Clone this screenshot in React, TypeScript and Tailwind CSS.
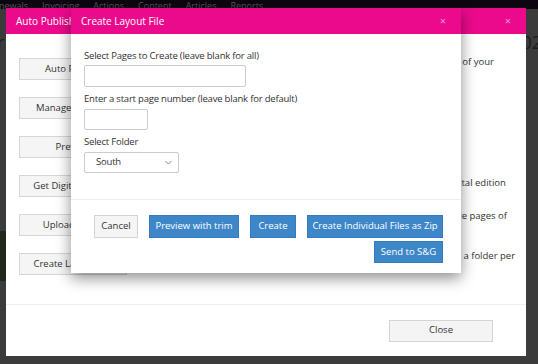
import React from "react";

const font = { fontFamily: '"Open Sans", "Liberation Sans", sans-serif' };

const navItems = ["newals", "Invoicing", "Actions", "Content", "Articles", "Reports"];

const rows = [
  { label: "Auto Publish", text: "Automatically publishes the current edition to all the configured outputs of your", shift: "-mt-[3px]" },
  { label: "Manage Outputs", text: "Manage outputs", shift: "-mt-[3px]" },
  { label: "Preview", text: "Preview", shift: "-mt-[3px]" },
  { label: "Get Digital Edition", text: "Download a zipped copy of all of the pages that are prepared for the digital edition", shift: "mt-[1px]" },
  { label: "Upload Pages", text: "Upload finished PDF files from your computer and replace all of the single pages of", shift: "-mt-[5px]" },
  { label: "Create Layout File", text: "Create a single layout file for this edition and then also save the files into a folder per", shift: "-mt-[4px]" },
];

function OuterModal() {
  return (
    <div className="absolute left-[6px] top-[8px] flex h-[348px] w-[520px] flex-col bg-white">
      <div className="flex h-[26px] items-center justify-between bg-[#eb0a8c] pl-[10px] pr-[15px] text-[10px] text-white">
        <span>Auto Publish</span>
        <span className="text-[11px] text-[#f59bcb]">×</span>
      </div>
      <div className="flex flex-1 flex-col gap-[17px] pl-[13px] pt-[24px]">
        {rows.map((row) => (
          <div key={row.label} className="flex items-start">
            <div className="flex h-[22px] w-[108px] shrink-0 items-center justify-center border border-[#d6d6d6] bg-[#f5f5f5] text-[9.5px] text-[#333]">
              {row.label}
            </div>
            <p className={`ml-[14px] w-[382px] text-[9.5px] leading-[14px] text-[#333] ${row.shift}`}>{row.text}</p>
          </div>
        ))}
      </div>
      <div className="flex h-[52px] items-center justify-end border-t border-[#eeeeee] pr-[33px]">
        <div className="flex h-[22px] w-[104px] items-center justify-center border border-[#d4d4d4] bg-[#f4f4f4] text-[9.5px] text-[#333]">
          Close
        </div>
      </div>
    </div>
  );
}

function InnerModal() {
  return (
    <div className="absolute left-[71px] top-[8px] flex h-[265px] w-[390px] flex-col bg-white shadow-[0_5px_14px_rgba(0,0,0,0.45)]">
      <div className="flex h-[26px] items-center justify-between bg-[#eb0a8c] pl-[10px] pr-[15px] text-[10px] text-white">
        <span>Create Layout File</span>
        <span className="text-[11px] text-[#f59bcb]">×</span>
      </div>
      <div className="flex flex-col px-[13px] pt-[15px] text-[9.5px] tracking-[-0.2px] text-[#333]">
        <label className="leading-[13px]">Select Pages to Create (leave blank for all)</label>
        <div className="mt-[3px] h-[22px] w-[162px] rounded-[2px] border border-[#cccccc]" />
        <label className="mt-[5px] leading-[13px]">Enter a start page number (leave blank for default)</label>
        <div className="mt-[4px] h-[21px] w-[64px] rounded-[2px] border border-[#cccccc]" />
        <label className="mt-[5px] leading-[13px]">Select Folder</label>
        <div className="mt-[4px] flex h-[21px] w-[95px] items-center justify-between rounded-[2px] border border-[#cccccc] pl-[11px] pr-[6px]">
          <span>South</span>
          <svg width="7" height="5" viewBox="0 0 7 5" fill="none" stroke="#888" strokeWidth="1">
            <path d="M0.5 1 L3.5 4 L6.5 1" />
          </svg>
        </div>
      </div>
      <div className="mt-[26px] flex flex-wrap justify-end gap-x-[11px] gap-y-[3px] border-t border-[#eeeeee] pl-[20px] pr-[18px] pt-[15px] text-[9.5px]">
        <div className="flex h-[23px] w-[44px] items-center justify-center border border-[#d4d4d4] bg-[#f5f5f5] text-[#333]">Cancel</div>
        <div className="flex h-[23px] w-[90px] items-center justify-center border border-[#357bbd] bg-[#3d87c9] text-white">Preview with trim</div>
        <div className="flex h-[23px] w-[46px] items-center justify-center border border-[#357bbd] bg-[#3d87c9] text-white">Create</div>
        <div className="flex h-[23px] w-[136px] items-center justify-center border border-[#357bbd] bg-[#3d87c9] text-white">Create Individual Files as Zip</div>
        <div className="flex h-[22px] w-[69px] items-center justify-center border border-[#357bbd] bg-[#3d87c9] text-white">Send to S&amp;G</div>
      </div>
    </div>
  );
}

export default function App() {
  return (
    <div className="relative h-[364px] w-[538px] overflow-hidden bg-[#3b3b3b]" style={font}>
      <div className="flex h-[9px] items-end gap-[14px] overflow-hidden bg-[#0d0610] text-[9px] leading-[11px] text-[#58535c]">
        {navItems.map((item, i) => (
          <span key={item} className={`-mb-[2px] whitespace-nowrap ${i === 0 ? "-ml-[1px]" : ""}`}>
            {item}
          </span>
        ))}
      </div>
      <div className="flex justify-between pt-[24px] text-[18px] leading-[18px] text-[#1b1b1b]">
        <span className="-ml-[3px]">r</span>
        <span className="-mr-[4px]">02</span>
      </div>
      <div className="mt-[180px] h-[50px] w-[6px] bg-[#1f281b]" />
      <OuterModal />
      <InnerModal />
    </div>
  );
}
